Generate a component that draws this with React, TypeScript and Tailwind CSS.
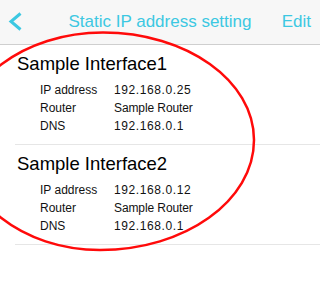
import React from 'react';

const interfaces = [
	{ name: 'Sample Interface1', ip: '192.168.0.25', router: 'Sample Router', dns: '192.168.0.1' },
	{ name: 'Sample Interface2', ip: '192.168.0.12', router: 'Sample Router', dns: '192.168.0.1' },
];

function Header() {
	return (
		<div className="relative flex h-[45px] items-center justify-center border-b border-[#cfcfcf] bg-[#f7f7f7] text-[17px] text-[#3cc8e2]">
			<svg className="absolute left-[8px] top-[12px]" width="15" height="19" viewBox="0 0 15 19">
				<path d="M12.5 1.5 L3 9.5 L12.5 17.5" fill="none" stroke="#3cc8e2" strokeWidth="3" />
			</svg>
			<span>Static IP address setting</span>
			<span className="absolute right-[9px]">Edit</span>
		</div>
	);
}

function Row({ label, value, numeric }: { label: string; value: string; numeric?: boolean }) {
	return (
		<div className="flex h-[18px] items-center text-[12px] leading-[18px] text-[#111]">
			<span className="w-[74px]">{label}</span>
			<span className={numeric ? 'tracking-[0.6px]' : 'tracking-[-0.1px]'}>{value}</span>
		</div>
	);
}

function InterfaceItem({ item }: { item: (typeof interfaces)[number] }) {
	return (
		<div className="ml-[15px] border-b border-[#e6e6e6] pb-[9px] pt-[8px]">
			<div className="pl-[2px] text-[18.5px] leading-[22px] text-black">{item.name}</div>
			<div className="mt-[6px] pl-[25px]">
				<Row label="IP address" value={item.ip} numeric />
				<Row label="Router" value={item.router} />
				<Row label="DNS" value={item.dns} numeric />
			</div>
		</div>
	);
}

export default function App() {
	return (
		<div className="relative h-[302px] w-[320px] overflow-hidden bg-white font-['Liberation_Sans',Arial,sans-serif]">
			<Header />
			{interfaces.map((item) => (
				<InterfaceItem key={item.name} item={item} />
			))}
			{/* red highlight ring */}
			<svg className="pointer-events-none absolute left-0 top-0" width="320" height="302" viewBox="0 0 320 302">
				<path
					d="M103 32.5 C186.4 32.5 254 80.6 254 140 C254 200.75 185 250 100 250 C22.7 250 -40 200.75 -40 140 C-40 80.6 24 32.5 103 32.5 Z"
					fill="none"
					stroke="#ff0a0a"
					strokeWidth="2.5"
				/>
			</svg>
		</div>
	);
}
